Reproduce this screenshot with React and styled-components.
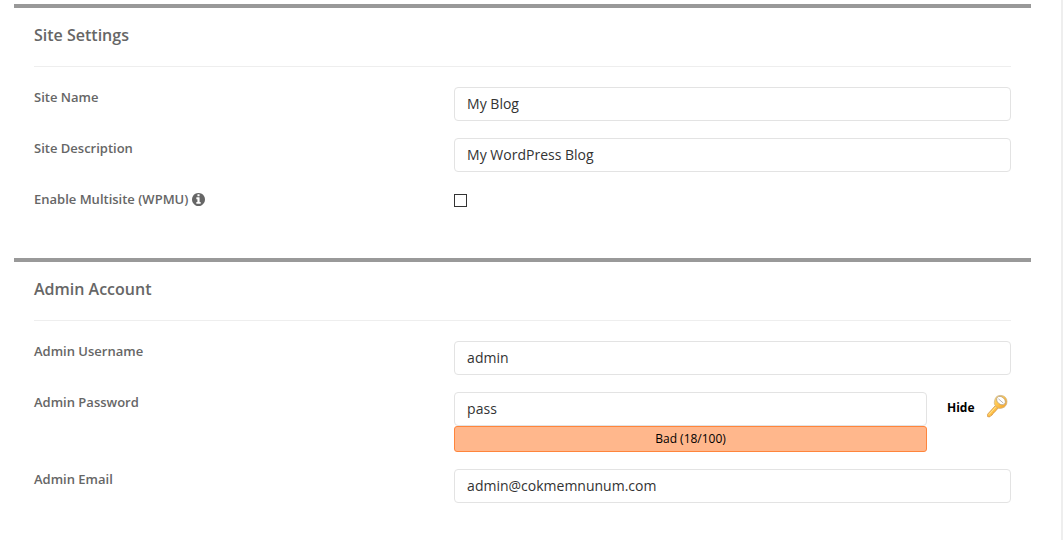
import React, { useState } from "react";
import styled, { createGlobalStyle } from "styled-components";

const App = () => {
  const [password, setPassword] = useState("pass");
  const [hidden, setHidden] = useState(false);

  return (
    <Page>
      <GlobalStyle />
      <Section>
        <Title>Site Settings</Title>
        <Field id="site-name" label="Site Name">
          <Input id="site-name" defaultValue="My Blog" />
        </Field>
        <Field id="site-description" label="Site Description">
          <Input id="site-description" defaultValue="My WordPress Blog" />
        </Field>
        <Field id="multisite" label="Enable Multisite (WPMU)" info>
          <Checkbox id="multisite" type="checkbox" />
        </Field>
      </Section>
      <Section>
        <Title>Admin Account</Title>
        <Field id="admin-username" label="Admin Username">
          <Input id="admin-username" defaultValue="admin" />
        </Field>
        <Field id="admin-password" label="Admin Password">
          <PasswordRow>
            <PasswordBox>
              <Input
                id="admin-password"
                type={hidden ? "password" : "text"}
                value={password}
                onChange={(e) => setPassword(e.target.value)}
              />
              <Strength>Bad (18/100)</Strength>
            </PasswordBox>
            <Actions>
              <HideButton type="button" onClick={() => setHidden(!hidden)}>
                {hidden ? "Show" : "Hide"}
              </HideButton>
              <KeyButton type="button" aria-label="Generate password">
                <KeyIcon />
              </KeyButton>
            </Actions>
          </PasswordRow>
        </Field>
        <Field id="admin-email" label="Admin Email">
          <Input
            id="admin-email"
            type="email"
            defaultValue="admin@cokmemnunum.com"
          />
        </Field>
      </Section>
    </Page>
  );
};

export default App;

const Field = ({ id, label, info, children }) => (
  <Row>
    <Label htmlFor={id}>
      {label}
      {info && <InfoIcon />}
    </Label>
    <Control>{children}</Control>
  </Row>
);

const InfoIcon = () => (
  <svg width="13" height="13" viewBox="128 128 1536 1536" aria-hidden="true">
    <path
      fill="currentColor"
      d="M1152 1376v-160q0-14-9-23t-23-9h-96v-512q0-14-9-23t-23-9h-320q-14 0-23 9t-9 23v160q0 14 9 23t23 9h96v320h-96q-14 0-23 9t-9 23v160q0 14 9 23t23 9h448q14 0 23-9t9-23zm-128-896v-160q0-14-9-23t-23-9h-192q-14 0-23 9t-9 23v160q0 14 9 23t23 9h192q14 0 23-9t9-23zm640 416q0 209-103 385.5t-279.5 279.5-385.5 103-385.5-103-279.5-279.5-103-385.5 103-385.5 279.5-279.5 385.5-103 385.5 103 279.5 279.5 103 385.5z"
    />
  </svg>
);

const KeyIcon = () => (
  <svg width="22" height="24" viewBox="0 0 22 24" aria-hidden="true">
    <defs>
      <linearGradient id="gold" x1="0" y1="0" x2="1" y2="1">
        <stop offset="0" stopColor="#ffe07a" />
        <stop offset="0.5" stopColor="#ffc248" />
        <stop offset="1" stopColor="#f09a26" />
      </linearGradient>
    </defs>
    <path
      d="M9.4 11.6 1.6 20.2 1.6 22.6 3.6 23 5 21.6 6.2 21 6.8 19.6 8 18.8 12.4 13.8Z"
      fill="url(#gold)"
      stroke="#cf8a35"
      strokeWidth="0.7"
      strokeLinejoin="round"
    />
    <path d="M2.8 20.6 10 12.6" stroke="#ffe391" strokeWidth="1" />
    <path
      d="M9 5.2C9.6 2.6 12.2 1.2 15 1.4C18.4 1.6 21 4 21 7.4C21 10.8 19 13.4 16.4 14C14.6 14.6 13 14.6 12 14L9 11.4C8 9.6 8.2 7.4 9 5.2Z"
      fill="url(#gold)"
      stroke="#cdb184"
      strokeWidth="0.7"
    />
    <ellipse
      cx="15"
      cy="6.6"
      rx="4.9"
      ry="3.6"
      transform="rotate(42 15 6.6)"
      fill="white"
      stroke="#b9a27c"
      strokeWidth="0.8"
    />
    <path d="M12.4 4.8 17.4 9.2" stroke="#b4b4b8" strokeWidth="1" />
  </svg>
);

const GlobalStyle = createGlobalStyle`
  * {
    box-sizing: border-box;
  }
  html,
  body {
    margin: 0;
    background-color: white;
  }
  body,
  input,
  button {
    font-family: "Open Sans", "Noto Sans", sans-serif;
  }
`;

const Page = styled.main`
  min-height: 100vh;
  padding: 4px 30px 0 14px;
  border-right: 2px solid #eee;
`;

const Section = styled.section`
  padding: 0 20px 35px;
  border-top: 4px solid #999;
`;

const Title = styled.h2`
  margin: 0 0 20px;
  padding: 15px 0 19px;
  border-bottom: 1px solid #eee;
  color: #666;
  font-size: 16px;
  font-weight: 600;
  line-height: 24px;
`;

const Row = styled.div`
  display: grid;
  grid-template-columns: 43% 1fr;
  min-height: 34px;
  & + & {
    margin-top: 17px;
  }
`;

const Label = styled.label`
  display: flex;
  align-items: center;
  gap: 4px;
  height: 20px;
  color: #666;
  font-size: 13px;
  font-weight: 600;
  line-height: 20px;
`;

const Control = styled.div`
  min-width: 0;
`;

const Input = styled.input`
  display: block;
  width: 100%;
  height: 34px;
  padding: 5px 12px 7px;
  border: 1px solid #e3e3e3;
  border-radius: 4px;
  background-color: white;
  color: #333;
  font-size: 14px;
  line-height: 20px;
`;

const Checkbox = styled.input`
  appearance: none;
  display: block;
  width: 13px;
  height: 13px;
  margin: 5px 0 0;
  border: 1px solid #333;
  background-color: white;
  :checked {
    background-color: #333;
  }
`;

const PasswordRow = styled.div`
  display: flex;
`;

const PasswordBox = styled.div`
  flex: 1;
  min-width: 0;
`;

const Strength = styled.div`
  padding: 2px 0;
  border: 1px solid #ff853c;
  border-radius: 3px;
  background-color: #ffb78c;
  color: black;
  font-size: 12px;
  line-height: 20px;
  text-align: center;
`;

const Actions = styled.div`
  display: flex;
  align-items: flex-end;
  justify-content: space-between;
  width: 84px;
  height: 26px;
  padding: 0 3px 0 20px;
`;

const HideButton = styled.button`
  padding: 0;
  border: 0;
  background: none;
  color: black;
  font-size: 12px;
  font-weight: 700;
  line-height: 20px;
  cursor: pointer;
`;

const KeyButton = styled.button`
  display: flex;
  padding: 0;
  border: 0;
  background: none;
  cursor: pointer;
`;
